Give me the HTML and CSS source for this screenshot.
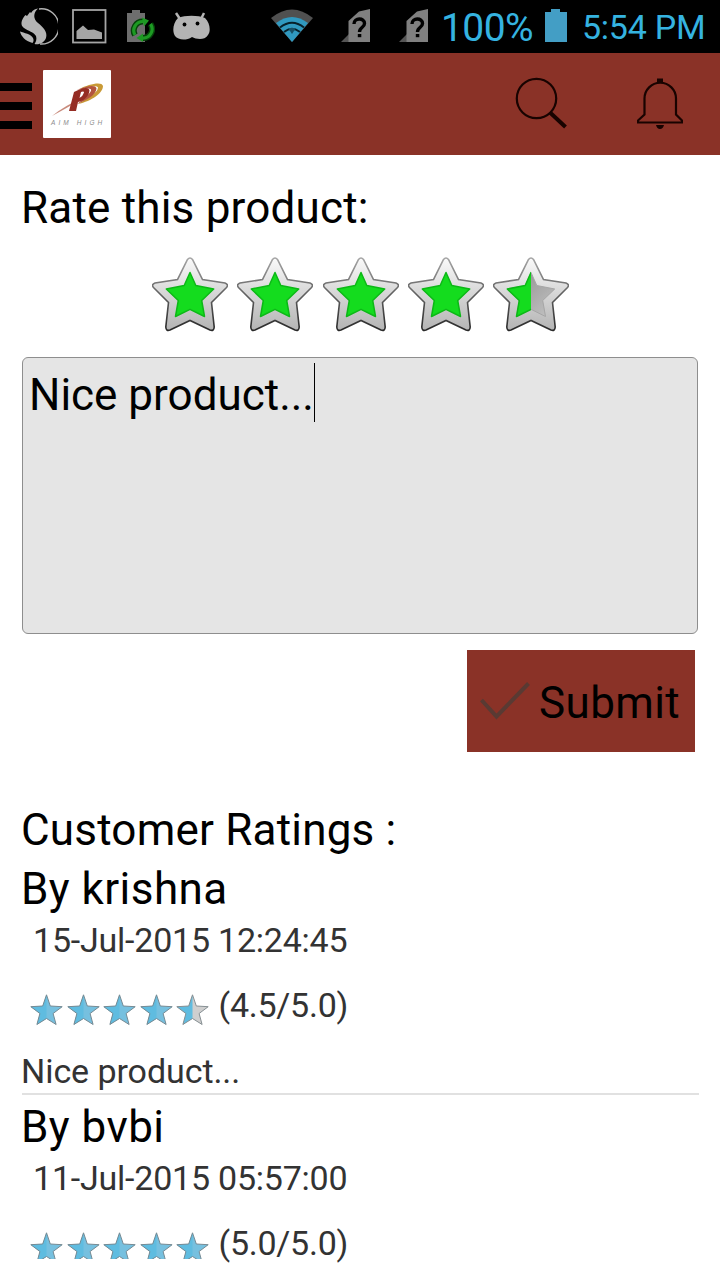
FILE: index.html
```html
<!DOCTYPE html>
<html lang="en">
<head>
    <meta charset="UTF-8">
    <meta name="viewport" content="width=device-width, initial-scale=1.0">
    <title>Rate this product</title>
    <link rel="stylesheet" href="styles.css">
</head>
<body>
    <!-- shared shapes -->
    <svg class="defs" width="0" height="0">
        <defs>
            <linearGradient id="silver" x1="0" y1="0" x2="0" y2="1">
                <stop offset="0" stop-color="#fafafa"/>
                <stop offset="0.5" stop-color="#d6d6d6"/>
                <stop offset="1" stop-color="#b4b4b4"/>
            </linearGradient>
            <linearGradient id="edge" x1="0" y1="0" x2="0" y2="1">
                <stop offset="0" stop-color="#a5a5a5"/>
                <stop offset="0.5" stop-color="#606060"/>
                <stop offset="1" stop-color="#292929"/>
            </linearGradient>
            <linearGradient id="empty" x1="0" y1="0" x2="1" y2="1">
                <stop offset="0" stop-color="#8c8c8c"/>
                <stop offset="1" stop-color="#c4c4c4"/>
            </linearGradient>
            <clipPath id="leftHalf"><rect x="0" y="0" width="38" height="76"/></clipPath>
            <g id="starFrame">
                <path d="M35.5 2.500Q38 -.5 40.500 2.500L50.500 22.500L73 26Q77 27.500 74.500 30.500L59.500 45.500L62.200 70Q62 74.500 58 73L38 63.500L18 73Q14 74.500 13.800 70L16.500 45.500L1.500 30.500Q-1 27.500 3 26L25.500 22.500Z" fill="url(#silver)" stroke="url(#edge)" stroke-width="1.600"/>
            </g>
            <path id="starCore" d="M38 15.500L43.800 28.500L61.700 32L49.700 43.500L52.500 59.500L38 52.300L23.500 59.500L26.300 43.500L14.300 32L32.200 28.500Z"/>
            <symbol id="bigStar" viewBox="0 0 76 76">
                <use href="#starFrame"/>
                <use href="#starCore" fill="#14dc1e" stroke="#0cb916" stroke-width="1.500" stroke-linejoin="round"/>
            </symbol>
            <symbol id="bigStarHalf" viewBox="0 0 76 76">
                <use href="#starFrame"/>
                <use href="#starCore" fill="url(#empty)" stroke="#a6a6a6" stroke-width="1"/>
                <g clip-path="url(#leftHalf)">
                    <use href="#starCore" fill="#14dc1e" stroke="#0cb916" stroke-width="1.500" stroke-linejoin="round"/>
                </g>
            </symbol>
            <path id="smallFull" d="M16.500 .8L20.300 12L32.200 12.700L23.100 19.500L26.100 30.500L16.500 24.500L6.900 30.500L9.900 19.500L.8 12.700L12.700 12Z"/>
            <path id="smallLeft" d="M16.500 .8L12.700 12L.8 12.700L9.900 19.500L6.900 30.500L16.500 24.500Z"/>
            <symbol id="smallStar" viewBox="0 0 33 32">
                <use href="#smallFull" fill="#76c0df"/>
                <use href="#smallLeft" fill="#5fbce0"/>
                <use href="#smallFull" fill="none" stroke="#768a93"/>
            </symbol>
            <symbol id="smallStarHalf" viewBox="0 0 33 32">
                <use href="#smallFull" fill="#cfcfcf"/>
                <use href="#smallLeft" fill="#5fbce0"/>
                <use href="#smallFull" fill="none" stroke="#868f93"/>
            </symbol>
            <symbol id="sim" viewBox="0 0 30 34">
                <path d="M0 33L9 24V33Z" fill="#555"/>
                <path d="M7.500 33V12L18 2.500L29 0V33Z" fill="#808080"/>
                <path d="M13 15C13 8.500 23.500 8.500 23.500 14.500C23.500 18.500 18.500 18 18.500 23" fill="none" stroke="#000" stroke-width="3.400"/>
                <rect x="16.800" y="25" width="3.500" height="3.200" fill="#000"/>
            </symbol>
        </defs>
    </svg>

    <div class="status-bar">
        <svg class="icon-swirl" width="38" height="38" viewBox="0 0 38 38">
            <path d="M19 1A17.600 17.600 0 1 1 20 36" fill="none" stroke="#b4b4b4" stroke-width="1.500"/>
            <path d="M18 .5C15 1 13 2 11 5L10 4L7 8L5.500 7C1 12 0 17 4 20C8 23 14 24 16 28C17 31 16 34 14.500 36C19 37 24 35 26 30C28 24 23 19 18 15C13 11 13 5 18 .5Z" fill="#b4b4b4"/>
            <path d="M0 23.500C4 25 11 26 13 30C14 32 13.500 34 12.500 35C5 33 1 28 0 23.500Z" fill="#b4b4b4"/>
        </svg>
        <svg class="icon-image" width="35" height="35" viewBox="0 0 35 35">
            <rect x="1" y="1" width="32.500" height="32.500" fill="none" stroke="#a5a5a5" stroke-width="1.800"/>
            <path d="M4.500 30V22L11 16.500L16 21L22 20.500L30 23.500V30Z" fill="#a5a5a5"/>
        </svg>
        <svg class="icon-charge" width="28" height="34" viewBox="0 0 28 34">
            <path d="M0 4H5V1H13V4H18V33H0Z" fill="#6e6e6e"/>
            <g fill="none">
                <path d="M8 26A9 9 0 0 1 16 12.500M23.500 15A9 9 0 0 1 15 29" stroke="#06420a" stroke-width="6"/>
                <path d="M8 26A9 9 0 0 1 16 12.500M23.500 15A9 9 0 0 1 15 29" stroke="#1d9a23" stroke-width="3.200"/>
            </g>
            <path d="M15 8.500L22 11.500L17 17.500ZM16 24.500V33L9.500 29Z" fill="#1d9a23"/>
        </svg>
        <svg class="icon-android" width="38" height="28" viewBox="0 0 38 28">
            <path d="M3 1L7 7M31 1L28 7" stroke="#b4b4b4" stroke-width="2.500"/>
            <path d="M5 6C12 3 25 3 32 6C37 11 38 19 35 23C31 29 23 27 19 25C13 29 5 28 2 24C-1 19 0 11 5 6Z" fill="#b4b4b4"/>
            <circle cx="11.500" cy="12.500" r="1.900" fill="#000"/><circle cx="24.500" cy="11.500" r="1.900" fill="#000"/>
        </svg>
        <svg class="icon-wifi" width="42" height="33" viewBox="0 0 42 33">
            <path d="M0 9Q21 -8 42 9L21 33Z" fill="#505050"/>
            <path d="M5 14Q21 2 37 14L21 33Z" fill="#3099c0"/>
            <path d="M9 18.500Q21 9 33 18.500M13 23Q21 16.500 29 23" fill="none" stroke="#07202a" stroke-width="2"/>
            <path d="M17 19H25L21 25Z" fill="#174f65"/>
        </svg>
        <svg class="icon-sim" width="30" height="34"><use href="#sim"/></svg>
        <svg class="icon-sim" width="30" height="34"><use href="#sim"/></svg>
        <span class="percent">100%</span>
        <svg class="icon-battery" width="22" height="33" viewBox="0 0 22 33">
            <path d="M0 3H6V0H15V3H22V33H0Z" fill="#439ec5"/>
        </svg>
        <span class="clock">5:54 PM</span>
    </div>

    <div class="header">
        <div class="menu"><i></i><i></i><i></i></div>
        <div class="logo">
            <svg width="68" height="50" viewBox="0 0 68 50">
                <path d="M36 19C46 14 59 11 60 16C60 23 49 31 35 34C47 27 55 22 55 17.500C54 15 44 17 36 19Z" fill="#c99a36"/>
                <path d="M34 20C42 16 53 14 53.500 18.500C53 25 44 30 34 34C43 27 49 22 48 19.500C46 17.500 40 19 34 20Z" fill="#b3553e"/>
                <path d="M9 46Q24 34 37 30Q24 38 9 46Z" fill="#c98b7c"/>
                <path d="M31 22C38 18 46 16 46.500 20.500C46 27 40 31 35 32L33 41H26Z" fill="#952d24"/>
                <path d="M38 22Q41 21 41 22.500Q40 26 36.500 28Z" fill="#fff"/>
            </svg>
            <span>AIM HIGH</span>
        </div>
        <svg class="icon-search" width="54" height="54" viewBox="0 0 54 54">
            <circle cx="22.500" cy="21.500" r="19.700" fill="none" stroke="#180300" stroke-width="2.200"/>
            <path d="M36 35.500L51.500 50" stroke="#180300" stroke-width="4"/>
        </svg>
        <svg class="icon-bell" width="46" height="52" viewBox="0 0 46 52">
            <path d="M7.500 36.500V20.500A15.700 15.700 0 0 1 39 20.500V36.500L45 42.500V44.500H1V42.500Z" fill="none" stroke="#180300" stroke-width="2.200"/>
            <path d="M20 5V.5H26V5ZM19 47H27Q26 51 23 51Q20 51 19 47Z" fill="#180300"/>
        </svg>
    </div>

    <div class="content">
        <h2>Rate this product:</h2>
        <div class="rate-stars">
            <svg><use href="#bigStar"/></svg>
            <svg><use href="#bigStar"/></svg>
            <svg><use href="#bigStar"/></svg>
            <svg><use href="#bigStar"/></svg>
            <svg><use href="#bigStarHalf"/></svg>
        </div>
        <div class="comment-box"><span>Nice product...</span><i class="caret"></i></div>
        <button class="submit">
            <svg width="50" height="38" viewBox="0 0 50 38">
                <path d="M1.500 18L16.500 34.500L48.500 1.500" fill="none" stroke="#593a33" stroke-width="4"/>
            </svg>
            <span>Submit</span>
        </button>

        <h2 class="ratings-title">Customer Ratings :</h2>
        <div class="review">
            <h3>By krishna</h3>
            <p class="date">15-Jul-2015 12:24:45</p>
            <div class="score">
                <svg><use href="#smallStar"/></svg>
                <svg><use href="#smallStar"/></svg>
                <svg><use href="#smallStar"/></svg>
                <svg><use href="#smallStar"/></svg>
                <svg><use href="#smallStarHalf"/></svg>
                <span>(4.5/5.0)</span>
            </div>
            <p class="text">Nice product...</p>
        </div>
        <div class="review last">
            <h3>By bvbi</h3>
            <p class="date">11-Jul-2015 05:57:00</p>
            <div class="score">
                <svg><use href="#smallStar"/></svg>
                <svg><use href="#smallStar"/></svg>
                <svg><use href="#smallStar"/></svg>
                <svg><use href="#smallStar"/></svg>
                <svg><use href="#smallStar"/></svg>
                <span>(5.0/5.0)</span>
            </div>
        </div>
    </div>
</body>
</html>
```
FILE: styles.css
```css
* {
    box-sizing: border-box;
}
body {
    margin: 0;
    width: 720px;
    height: 1280px;
    background-color: #fff;
    color: #000;
    font-family: Roboto, sans-serif;
}
svg {
    display: block;
    flex: none;
}
.defs {
    position: absolute;
}
h2, h3, p {
    margin: 0;
    font-weight: normal;
    white-space: nowrap;
}

/* status bar */
.status-bar {
    display: flex;
    align-items: flex-start;
    height: 53px;
    padding-left: 20px;
    background-color: #000;
    color: #35b3e0;
    white-space: nowrap;
}
.icon-swirl {
    margin-top: 8px;
}
.icon-image {
    margin: 9px 0 0 14px;
}
.icon-charge {
    margin: 9px 0 0 20px;
}
.icon-android {
    margin: 12px 0 0 18px;
}
.icon-wifi {
    margin: 9px 0 0 60px;
}
.icon-sim {
    margin: 9px 0 0 28px;
}
.percent {
    width: 93px;
    margin-left: 12px;
    font-size: 39px;
    line-height: 56px;
    letter-spacing: -0.6px;
}
.icon-battery {
    margin: 9px 0 0 11px;
}
.clock {
    margin-left: 15px;
    font-size: 34px;
    line-height: 54px;
    letter-spacing: -0.25px;
}

/* header */
.header {
    display: flex;
    height: 102px;
    background-color: #8a3227;
}
.menu {
    display: flex;
    flex-direction: column;
    gap: 11px;
    width: 32px;
    padding-top: 30px;
}
.menu i {
    height: 8px;
    background-color: #000;
}
.logo {
    width: 68px;
    height: 68px;
    margin: 17px 0 0 11px;
    border-radius: 1px;
    background-color: #fff;
}
.logo span {
    display: block;
    margin-left: 8px;
    color: #8c8c8c;
    font: italic 6.5px/6px "Liberation Sans", sans-serif;
    letter-spacing: 3.1px;
    white-space: nowrap;
}
.icon-search {
    margin: 24px 0 0 403px;
}
.icon-bell {
    margin: 25px 0 0 69px;
}

/* page */
.content {
    height: 1125px;
    padding: 28px 22px 0;
}
h2, h3 {
    margin-left: -1px;
    font-size: 44px;
    line-height: 52px;
    letter-spacing: 0.2px;
}
h2 {
    margin-top: -1px;
}
h3 {
    letter-spacing: 0.45px;
}
.rate-stars {
    display: flex;
    gap: 9.3px;
    margin: 23px 0 0 130px;
}
.rate-stars svg {
    width: 76px;
    height: 76px;
}
.comment-box {
    display: flex;
    height: 277px;
    margin-top: 24px;
    padding: 5px 6px;
    border: 1px solid #8e8e8e;
    border-radius: 6px;
    background-color: #e5e5e5;
    font-size: 44px;
    line-height: 64px;
}
.comment-box span {
    width: 285px;
    white-space: nowrap;
}
.caret {
    width: 1px;
    height: 59px;
    background-color: #000;
}
.submit {
    display: flex;
    align-items: center;
    width: 228px;
    height: 102px;
    margin: 16px 0 0 445px;
    padding: 0 0 0 13px;
    border: none;
    background-color: #8a3227;
    color: #000;
    font-family: inherit;
    font-size: 44px;
    line-height: 52px;
    letter-spacing: 0.4px;
}
.submit span {
    margin: 4px 0 0 9px;
}
.ratings-title {
    margin-top: 52px;
}
.review {
    width: 677px;
    height: 232px;
    margin-top: 6px;
    border-bottom: 2px solid #e1e1e1;
}
.ratings-title + .review {
    margin-top: 7px;
}
.review.last {
    height: auto;
    border-bottom: none;
}
.date, .score, .text {
    color: #333;
    font-size: 34px;
    line-height: 42px;
}
.date {
    margin: 4px 0 0 11px;
    letter-spacing: -0.22px;
}
.score {
    display: flex;
    gap: 3.5px;
    margin: 23px 0 0 8px;
}
.score svg {
    width: 33px;
    height: 32px;
    margin-top: 10px;
}
/* the list ends part way through these stars */
.last .score svg {
    clip-path: inset(0 0 5px 0);
}
.score span {
    margin-left: 6px;
    letter-spacing: -0.25px;
}
.text {
    margin: 24px 0 0 -1px;
    letter-spacing: -0.07px;
}
```
